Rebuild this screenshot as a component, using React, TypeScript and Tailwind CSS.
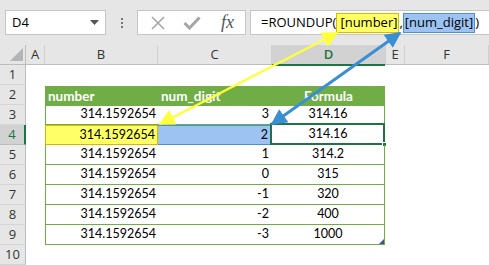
import React from 'react';

const DATA: { c: string; d: string }[] = [
  { c: '3', d: '314.16' },
  { c: '2', d: '314.16' },
  { c: '1', d: '314.2' },
  { c: '0', d: '315' },
  { c: '-1', d: '320' },
  { c: '-2', d: '400' },
  { c: '-3', d: '1000' },
];

const CELL_FONT = "font-['Lato','Liberation_Sans',sans-serif] text-[12.5px] text-black";

function RowHead({ n, active }: { n: number; active?: boolean }) {
  return (
    <div
      className={[
        "w-[26px] h-full flex items-center justify-center border-b font-['Open_Sans',sans-serif] text-[13px]",
        active
          ? 'bg-[#d2d2d2] text-[#217346] border-b-[#bcbcbc] border-r-2 border-r-[#217346]'
          : 'bg-[#e6e6e6] text-[#333] border-b-[#d4d4d4] border-r border-r-[#bdbdbd]',
      ].join(' ')}
    >
      {n}
    </div>
  );
}

function Toolbar() {
  return (
    <div className="h-[45px] bg-[#e6e6e6] flex items-start pt-[10px] pl-[5px] font-['Open_Sans',sans-serif]">
      <div className="w-[101px] h-[25px] bg-white border border-[#c6c6c6] flex items-center justify-between pl-[6px] pr-[6px] text-[13px] text-black">
        <span>D4</span>
        <svg width="9" height="5" viewBox="0 0 9 5">
          <path d="M0 0 L9 0 L4.5 5 Z" fill="#555" />
        </svg>
      </div>
      <div className="w-[31px] h-[25px] flex flex-col items-center justify-center gap-[2px]">
        <div className="w-[2px] h-[2px] bg-[#777]" />
        <div className="w-[2px] h-[2px] bg-[#777]" />
        <div className="w-[2px] h-[2px] bg-[#777]" />
      </div>
      <div className="w-[109px] h-[25px] bg-white border border-[#c6c6c6] flex items-center pl-[13px]">
        <svg width="14" height="14" viewBox="0 0 14 14">
          <path d="M1 1 L13 13 M13 1 L1 13" stroke="#a6a6a6" strokeWidth="1.6" />
        </svg>
        <svg width="18" height="14" viewBox="0 0 18 14" className="ml-[18px]">
          <path d="M1.5 7 L6.5 12 L16.5 1.5" stroke="#a6a6a6" strokeWidth="3" fill="none" />
        </svg>
        <span className="ml-[20px] font-['Liberation_Serif',serif] italic text-[18px] leading-none text-[#555] -mt-[2px]">
          fx
        </span>
      </div>
      <div className="flex-1 ml-[4px] h-[25px] bg-white border border-r-0 border-[#c6c6c6] flex items-center pl-[10px] text-[13px] text-black whitespace-nowrap">
        <span>=ROUNDUP(</span>
        <span className="h-[20px] flex items-center bg-[#ffff66] border border-[#e2b700] pl-[3px] pr-[1px]">[number]</span>
        <span>,</span>
        <span className="h-[20px] flex items-center bg-[#9cc3f2] border border-[#4a8fdd] pl-[1px] pr-[1px]">[num_digit]</span>
        <span>)</span>
      </div>
    </div>
  );
}

function ColHeaders() {
  const base = "h-full flex items-center justify-center border-r border-[#d0d0d0] font-['Open_Sans',sans-serif] text-[13px] text-[#333]";
  return (
    <div className="h-[20px] flex bg-[#e6e6e6] border-b border-[#bdbdbd]">
      <div className="w-[26px] h-full relative border-r border-[#bdbdbd]">
        <svg width="14" height="14" viewBox="0 0 14 14" className="absolute left-[10px] top-[3px]">
          <path d="M13 0 L13 13 L0 13 Z" fill="#b4b4b4" />
        </svg>
      </div>
      <div className={`w-[19px] ${base}`}>A</div>
      <div className={`w-[113px] ${base}`}>B</div>
      <div className={`w-[114px] ${base}`}>C</div>
      <div className="w-[113px] h-[21px] flex items-center justify-center bg-[#d2d2d2] border-b-2 border-[#217346] font-['Open_Sans',sans-serif] font-semibold text-[13px] text-[#217346]">
        D
      </div>
      <div className={`w-[20px] ${base} border-l border-l-[#d0d0d0]`}>E</div>
      <div className={`w-[84px] ${base}`}>F</div>
    </div>
  );
}

function Row({ n, children }: { n: number; children?: React.ReactNode }) {
  return (
    <div className="h-[20px] flex">
      <RowHead n={n} active={n === 4} />
      <div className="w-[19px]" />
      {children ?? <div className="w-[340px]" />}
    </div>
  );
}

export default function App() {
  return (
    <div className="relative w-[489px] h-[265px] overflow-hidden bg-white">
      <Toolbar />
      <ColHeaders />
      <div className={CELL_FONT}>
        <Row n={1} />
        <Row n={2}>
          <div className="w-[340px] h-[20px] mt-[1px] flex bg-[#70ad47] text-white font-bold text-[13.5px]">
            <div className="w-[113px] pl-[3px] flex items-center">number</div>
            <div className="w-[114px] pl-[3px] flex items-center">num_digit</div>
            <div className="w-[113px] flex items-center justify-center">Formula</div>
          </div>
        </Row>
        {DATA.map((r, i) => {
          const n = i + 3;
          const sel = n === 4;
          return (
            <Row key={n} n={n}>
              <div
                className={[
                  'w-[113px] h-full flex items-center justify-end pr-[2px] border-l border-b',
                  sel ? 'bg-[#ffff66] border-[#dcb500] border-t border-r' : 'border-[#70ad47]',
                ].join(' ')}
              >
                314.1592654
              </div>
              <div
                className={[
                  'w-[114px] h-full flex items-center justify-end pr-[3px] border-b',
                  sel ? 'bg-[#9cc3f2] border-[#4a8fdd] border-t border-r' : 'border-[#70ad47]',
                ].join(' ')}
              >
                {r.c}
              </div>
              <div className="w-[113px] h-full relative flex items-center justify-center border-b border-r border-[#70ad47]">
                {r.d}
                {sel && (
                  <>
                    <div className="absolute -left-[2px] -top-[2px] -right-[1px] -bottom-[1px] border-2 border-[#217346]" />
                    <div className="absolute -right-[3px] -bottom-[3px] w-[5px] h-[5px] bg-[#217346] border border-white" />
                  </>
                )}
                {n === 9 && (
                  <svg width="5" height="5" viewBox="0 0 5 5" className="absolute right-0 bottom-0">
                    <path d="M5 0 L5 5 L0 5 Z" fill="#3b4ea0" />
                  </svg>
                )}
              </div>
            </Row>
          );
        })}
        <Row n={10} />
      </div>

      <svg className="absolute inset-0 pointer-events-none" width="489" height="265">
        <defs>
          <marker id="ya" viewBox="0 0 10 10" refX="9" refY="5" markerWidth="20" markerHeight="16" markerUnits="userSpaceOnUse" orient="auto-start-reverse">
            <path d="M0 0 L10 5 L0 10 Z" fill="#ffff3a" />
          </marker>
          <marker id="ba" viewBox="0 0 10 10" refX="9" refY="5" markerWidth="20" markerHeight="16" markerUnits="userSpaceOnUse" orient="auto-start-reverse">
            <path d="M0 0 L10 5 L0 10 Z" fill="#3a8fd2" />
          </marker>
        </defs>
        <line x1="160" y1="124" x2="337" y2="33" stroke="#ffff3a" strokeWidth="2.5" markerStart="url(#ya)" markerEnd="url(#ya)" />
        <line x1="272" y1="124" x2="400" y2="33" stroke="#3a8fd2" strokeWidth="3" markerStart="url(#ba)" markerEnd="url(#ba)" />
      </svg>
    </div>
  );
}
